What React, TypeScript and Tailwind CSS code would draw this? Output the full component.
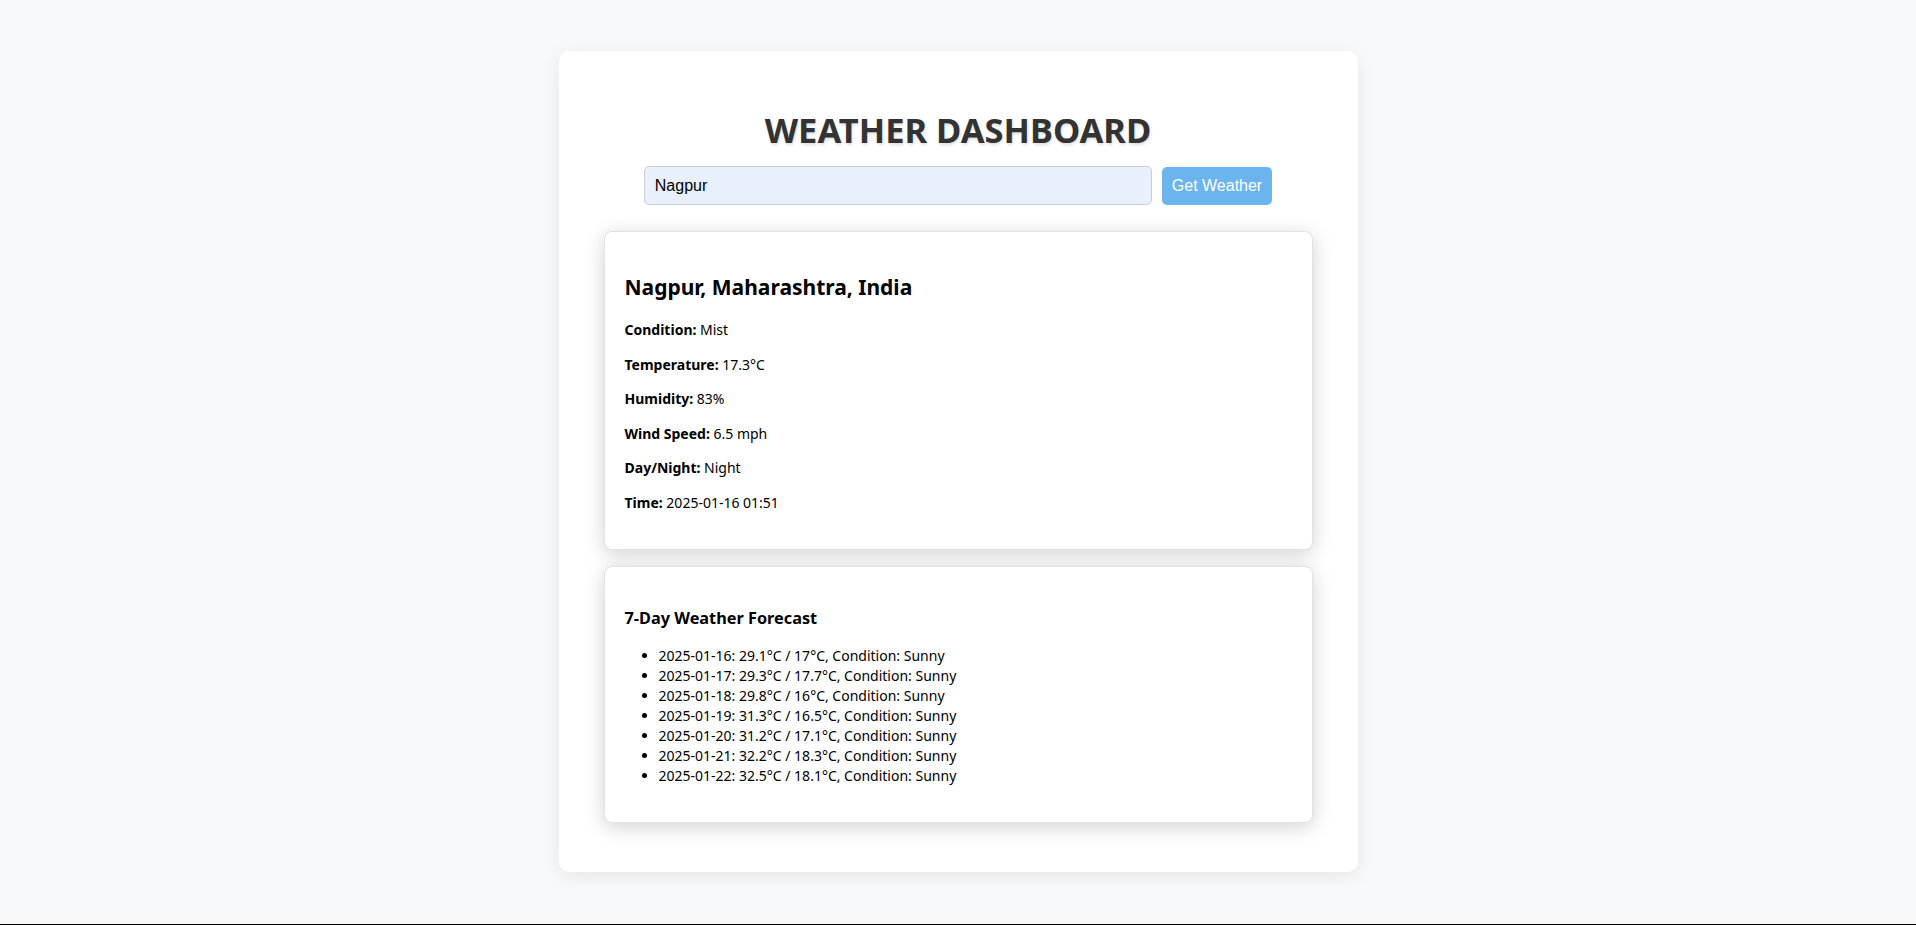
const current = {
  location: "Nagpur, Maharashtra, India",
  rows: [
    { label: "Condition:", value: "Mist" },
    { label: "Temperature:", value: "17.3°C" },
    { label: "Humidity:", value: "83%" },
    { label: "Wind Speed:", value: "6.5 mph" },
    { label: "Day/Night:", value: "Night" },
    { label: "Time:", value: "2025-01-16 01:51" },
  ],
};

const forecast = [
  { date: "2025-01-16", max: "29.1", min: "17", condition: "Sunny" },
  { date: "2025-01-17", max: "29.3", min: "17.7", condition: "Sunny" },
  { date: "2025-01-18", max: "29.8", min: "16", condition: "Sunny" },
  { date: "2025-01-19", max: "31.3", min: "16.5", condition: "Sunny" },
  { date: "2025-01-20", max: "31.2", min: "17.1", condition: "Sunny" },
  { date: "2025-01-21", max: "32.2", min: "18.3", condition: "Sunny" },
  { date: "2025-01-22", max: "32.5", min: "18.1", condition: "Sunny" },
];

export default function App() {
  return (
    <div className="h-screen box-border border-b border-black bg-[#f8f9fa] font-['Noto_Sans',sans-serif] text-black">
      <div className="w-[799px] mx-auto pt-[51px]">
        <div className="bg-white rounded-[10px] shadow-[0_4px_20px_rgba(0,0,0,0.08)] px-[45px] pt-[57px] pb-[49px]">
          <h1 className="text-center text-[34.5px] leading-[44px] font-bold text-[#333] [text-shadow:1px_2px_3px_rgba(0,0,0,0.12)]">
            WEATHER DASHBOARD
          </h1>

          <div className="mt-[14px] flex items-center justify-center gap-[10px]">
            <input
              type="text"
              defaultValue="Nagpur"
              className="w-[508px] h-[39px] px-[10px] rounded-[5px] border border-[#ccc] bg-[#e8f0fe] text-[16px] font-['Liberation_Sans',Arial,sans-serif] text-black outline-none"
            />
            <button className="h-[38px] px-[10px] rounded-[5px] bg-[#6cb4ee] text-white text-[16px] font-['Liberation_Sans',Arial,sans-serif]">
              Get Weather
            </button>
          </div>

          <div className="mt-[26px] bg-white rounded-[8px] border border-[#e2e2e2] shadow-[0_4px_20px_rgba(0,0,0,0.18)] px-5 pt-[39px] pb-[36px]">
            <h2 className="text-[21px] leading-[32px] font-bold">{current.location}</h2>
            <div className="mt-[17px] flex flex-col gap-[14.6px] text-[14px] leading-[20px]">
              {current.rows.map((r) => (
                <p key={r.label}>
                  <span className="font-bold">{r.label}</span> {r.value}
                </p>
              ))}
            </div>
          </div>

          <div className="mt-[16px] bg-white rounded-[8px] border border-[#e2e2e2] shadow-[0_4px_20px_rgba(0,0,0,0.18)] px-5 pt-[39px] pb-[36px]">
            <h3 className="text-[16.3px] leading-[25px] font-bold">7-Day Weather Forecast</h3>
            <ul className="mt-[15px] list-disc pl-[34px] text-[14px] leading-[20px]">
              {forecast.map((d) => (
                <li key={d.date}>
                  {d.date}: {d.max}°C / {d.min}°C, Condition: {d.condition}
                </li>
              ))}
            </ul>
          </div>
        </div>
      </div>
    </div>
  );
}
